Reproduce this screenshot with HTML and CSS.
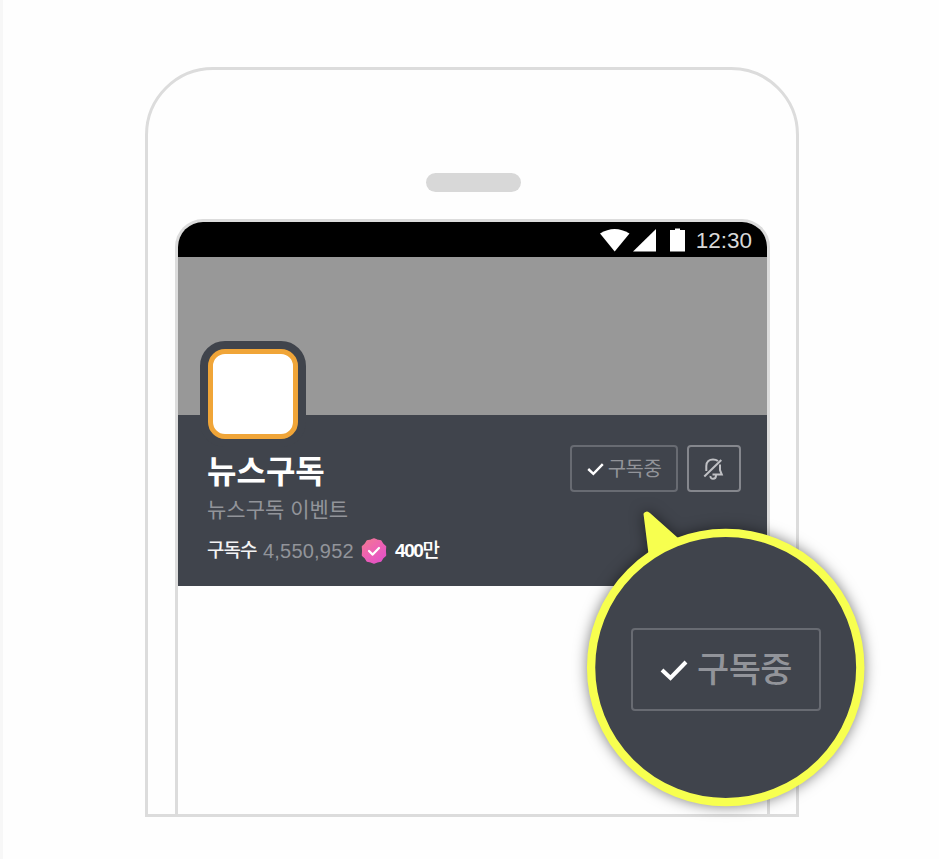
FILE: index.html
```html
<!DOCTYPE html>
<html lang="ko">
<head>
<meta charset="utf-8">
<title>뉴스구독</title>
<link rel="stylesheet" href="styles.css">
</head>
<body>
<main class="stage">
  <div class="phone">
    <div class="speaker"></div>
    <section class="screen">
      <div class="status">
        <svg class="status-icons" width="88" height="24" viewBox="0 0 88 24" fill="#fff">
          <path d="M0 5.500Q14.500-3.500 29.500 5.500L14.700 23.500Z"/>
          <path d="M56 1V23.500H33Z"/>
          <path d="M70 2H75V0.500H80V2H85V23.500H70Z"/>
        </svg>
        <span class="clock">12:30</span>
      </div>
      <div class="cover"><div class="avatar"></div></div>
      <div class="profile">
        <div class="info">
          <h1>뉴스구독</h1>
          <p class="desc">뉴스구독 이벤트</p>
          <p class="stats">
            <span class="label">구독수</span><span class="count">4,550,952</span>
            <svg class="badge" width="26" height="26" viewBox="-13 -13 26 26">
              <defs><linearGradient id="pink" x1="0" y1="0" x2=".75" y2="1"><stop offset="0" stop-color="#f27a90"/><stop offset=".55" stop-color="#ee60b4"/><stop offset="1" stop-color="#e352c5"/></linearGradient></defs>
              <path fill="url(#pink)" stroke="url(#pink)" stroke-width="1.500" stroke-linejoin="round" d="M0-12L3.200-10.800L6.900-9.900L8.900-6.700L11.500-4.400L11.200 0L11.500 4.400L8.900 6.700L6.900 9.900L3.200 10.800L0 12L-3.200 10.800L-6.900 9.900L-8.900 6.700L-11.500 4.400L-11.200 0L-11.500-4.400L-8.900-6.700L-6.900-9.900L-3.200-10.800Z"/>
              <path d="M-5 0L-1.300 3.600L5-3" fill="none" stroke="#fff" stroke-width="2.200" stroke-linecap="round" stroke-linejoin="round"/>
            </svg>
            <span class="milestone">400<span class="unit">만</span></span>
          </p>
        </div>
        <div class="actions">
          <div class="button">
            <svg class="check" viewBox="0 0 28 22"><path d="M2 11L10.500 19L26 3"/></svg>
            <span>구독중</span>
          </div>
          <div class="button bell">
            <svg width="22" height="24" viewBox="0 0 22 24" fill="none" stroke="#bfc0c4" stroke-width="2">
              <path d="M3.300 14V9C3.300 4.500 6.400 2.400 10 2.400C12 2.400 13.500 2.800 14.900 4M17 7.500V13L18.800 17.600H9.500M1.300 19.500L18.300 3M7.500 19C7 22.800 13 22.800 13 18.500"/>
            </svg>
          </div>
        </div>
      </div>
    </section>
  </div>
  <div class="callout">
    <svg class="bubble" width="318" height="334" viewBox="570 494 318 334">
      <g class="outline">
        <path d="M644.500 514Q646 511.500 649 513.500L681 542L650 558Z" fill="#f7ff4f" stroke="#f7ff4f" stroke-width="2" stroke-linejoin="round"/>
        <circle cx="725.700" cy="667.500" r="134.600" fill="#40444c" stroke="#f7ff4f" stroke-width="8.300"/>
      </g>
    </svg>
    <div class="button large">
      <svg class="check" viewBox="0 0 28 22"><path d="M2 11L10.500 19L26 3"/></svg>
      <span>구독중</span>
    </div>
  </div>
</main>
</body>
</html>
```

FILE: styles.css
```css
*, *::before { box-sizing: border-box; }
body {
  margin: 0;
  background: #fefefe;
  font-family: "Liberation Sans", "Noto Sans CJK KR", sans-serif;
}
.stage {
  position: relative;
  height: 859px;
  overflow: hidden;
  border-left: 3px solid #f7f7f7;
  padding: 67px 0 0 142px;
}
.phone {
  width: 654px;
  height: 750px;
  border: 3px solid #dcdcdc;
  border-radius: 68px 68px 0 0;
  display: flex;
  flex-direction: column;
  align-items: center;
  padding-top: 103px;
}
.speaker {
  width: 95px;
  height: 19px;
  border-radius: 10px;
  background: #d8d8d8;
  margin-left: 3px;
}
.screen {
  width: 595px;
  margin: 27px 0 0 1px;
  flex: 1;
  border: 3px solid #dcdcdc;
  border-bottom: 0;
  border-radius: 28px 28px 0 0;
  overflow: hidden;
}
.status {
  height: 35px;
  background: #000;
  display: flex;
  justify-content: flex-end;
  align-items: center;
  padding: 1px 15px 0 0;
}
.status-icons { margin-right: 8px; }
.clock {
  color: #d8d8d8;
  font-size: 22.500px;
  line-height: 26px;
  padding-top: 2px;
}
.cover {
  height: 158px;
  background: #989898;
  padding: 84px 0 0 22px;
}
.avatar {
  position: relative;
  width: 106px;
  height: 106px;
  border: 8px solid #40444c;
  border-radius: 25px;
  background: #40444c;
}
.avatar::before {
  content: "";
  display: block;
  width: 90px;
  height: 90px;
  border: 5.500px solid #f0a538;
  border-radius: 17px;
  background: #fff;
}
.profile {
  height: 171px;
  background: #40444c;
  display: flex;
  justify-content: space-between;
  padding: 30px 26px 0 29px;
}
.info { padding-top: 4px; }
h1, p { margin: 0; white-space: nowrap; }
h1 {
  font: 700 32px/40px "Noto Sans CJK KR", sans-serif;
  color: #fff;
}
.desc {
  font: 400 21px/30px "Noto Sans CJK KR", sans-serif;
  color: #92949a;
  margin-top: 4px;
}
.stats {
  display: flex;
  align-items: center;
  height: 30px;
  margin-top: 13px;
  font-size: 20px;
  line-height: 30px;
}
.label {
  width: 56px;
  color: #f3f3f4;
  font-size: 19px;
  font-weight: 500;
  letter-spacing: -1px;
}
.count { color: #92949a; letter-spacing: .2px; width: 98px; }
.badge { margin-right: 8px; }
.milestone { color: #fff; font-weight: 700; font-size: 19px; letter-spacing: -1.400px; }
.unit { font-weight: 500; }
.actions { display: flex; gap: 9px; }
.button {
  width: 108px;
  height: 47px;
  border: 2px solid #686b72;
  border-radius: 4px;
  display: flex;
  align-items: center;
  justify-content: center;
  gap: 4px;
  font: 400 20px/28px "Noto Sans CJK KR", sans-serif;
  letter-spacing: -.5px;
  color: #92949a;
  white-space: nowrap;
}
.button span { padding-bottom: 2px; }
.check {
  width: 17px;
  height: 14px;
  fill: none;
  stroke: #fff;
  stroke-width: 4;
}
.button.bell { width: 54px; border-color: #85878d; }
.callout {
  position: absolute;
  left: 567px;
  top: 494px;
  width: 318px;
  height: 334px;
}
.bubble { display: block; overflow: visible; }
.outline { filter: drop-shadow(0 0 7px rgba(0, 0, 0, .5)); }
.callout .large {
  position: absolute;
  left: 61px;
  top: 134px;
  width: 190px;
  height: 83px;
  border-width: 2px;
  gap: 9px;
  font-size: 35px;
  font-weight: 500;
  line-height: 46px;
}
.large span { padding-bottom: 5px; }
.large .check { width: 28px; height: 22px; }
```
